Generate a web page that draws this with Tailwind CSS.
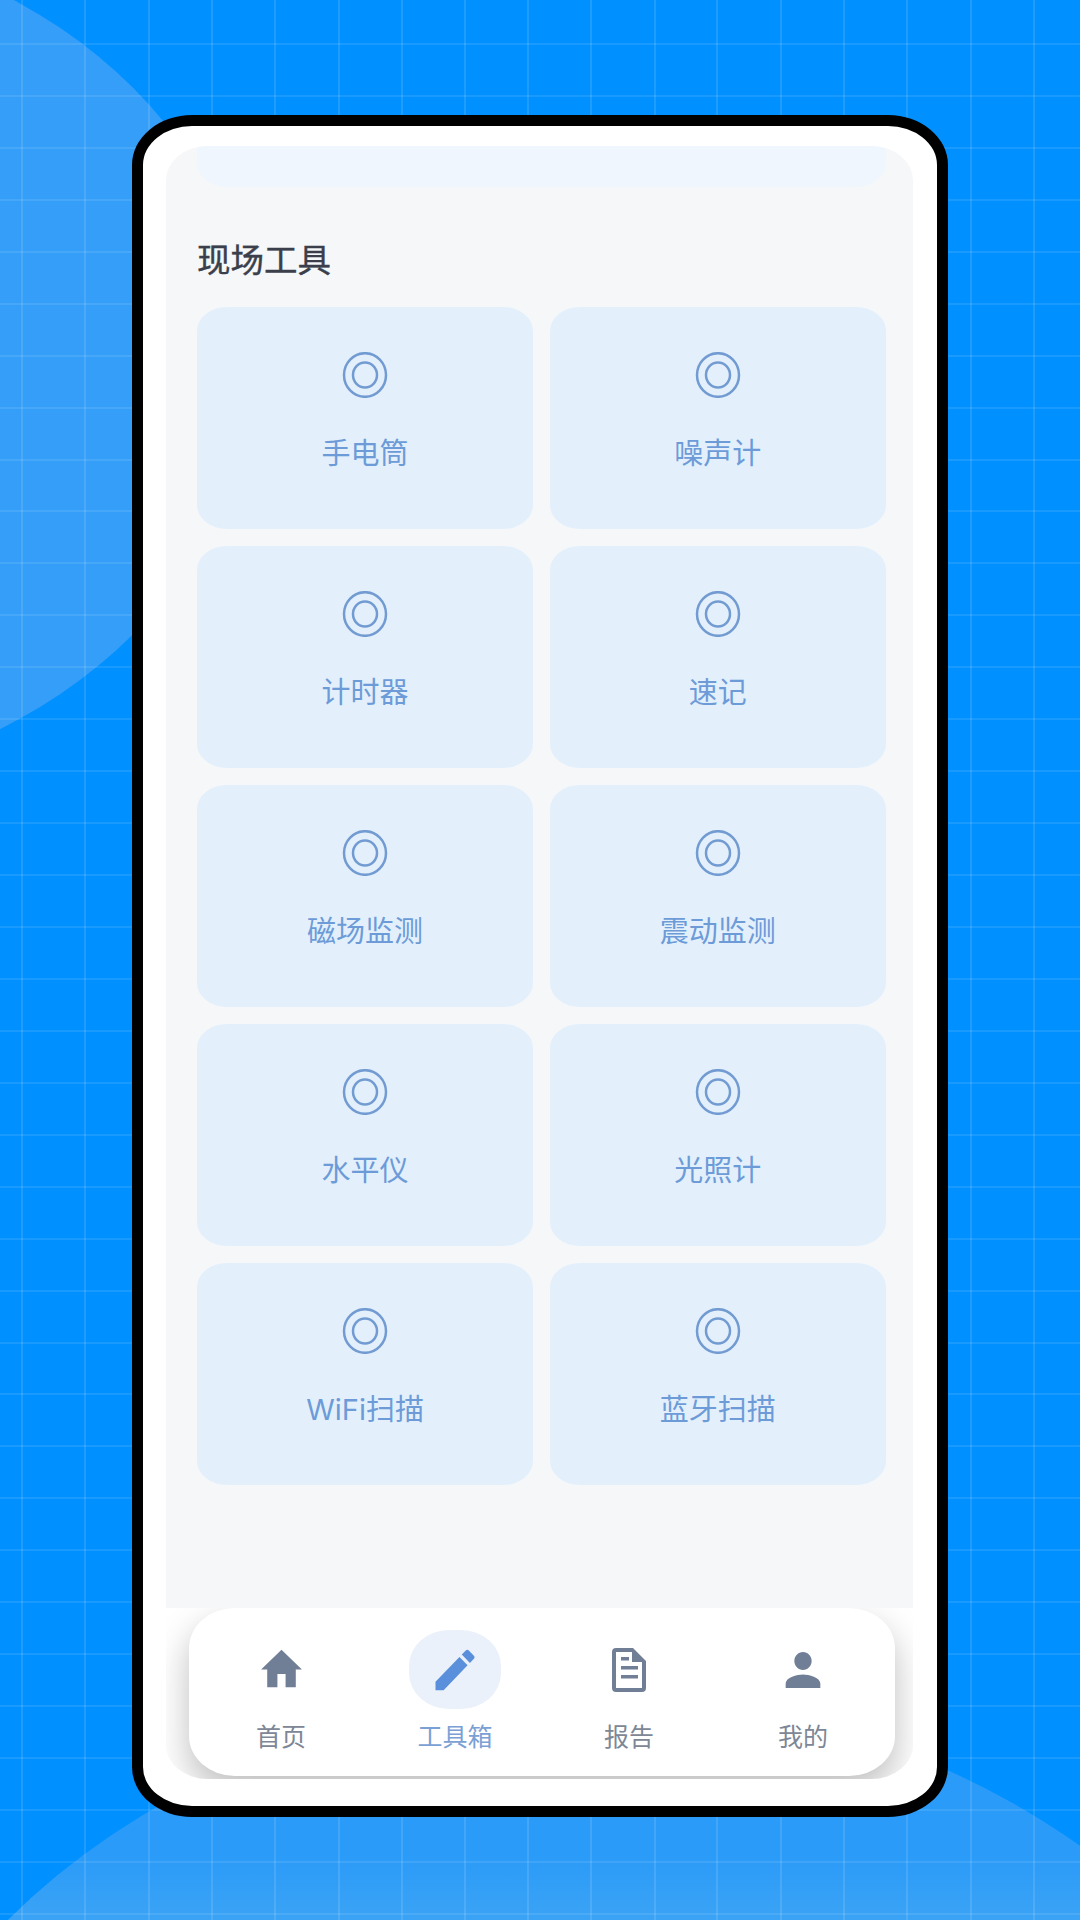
<!DOCTYPE html>
<html lang="zh-CN">
<head>
    <meta charset="UTF-8">
    <meta name="viewport" content="width=device-width, initial-scale=1.0">
    <title>现场工具</title>
    <script src="https://cdn.jsdelivr.net/npm/@tailwindcss/browser@4"></script>
</head>
<body class="bg-[#0090ff] font-['Inter','Noto_Sans_CJK_SC',sans-serif]">
    <div class="relative w-[1080px] h-[1920px] overflow-hidden bg-[#0090ff] pt-[115px]">
        <!-- background shapes and grid -->
        <div class="absolute left-[-798px] top-[-70px] w-[1050px] h-[862px] rounded-[50%] bg-[#349ef8]"></div>
        <div class="absolute left-[-163px] top-[1695px] w-[1502px] h-[1233px] rounded-[50%] bg-[linear-gradient(to_bottom,#2a9bf8_0,#2a9bf8_160px,#3ba3f5_225px)]"></div>
        <svg class="absolute left-0 top-0" width="1080" height="1920" fill="none" stroke="#ffffff" stroke-opacity="0.2" stroke-width="1.2">
            <path d="M22 0V1920M85 0V1920M149 0V1920M212 0V1920M275 0V1920M339 0V1920M402 0V1920M465 0V1920M528 0V1920M591 0V1920M655 0V1920M717 0V1920M781 0V1920M844 0V1920M907 0V1920M971 0V1920M1034 0V1920"/>
            <path d="M0 44H1080M0 96H1080M0 148H1080M0 200H1080M0 252H1080M0 304H1080M0 356H1080M0 408H1080M0 460H1080M0 511H1080M0 563H1080M0 615H1080M0 667H1080M0 719H1080M0 771H1080M0 823H1080M0 875H1080M0 927H1080M0 979H1080M0 1031H1080M0 1083H1080M0 1135H1080M0 1187H1080M0 1239H1080M0 1291H1080M0 1343H1080M0 1394H1080M0 1446H1080M0 1498H1080M0 1550H1080M0 1602H1080M0 1654H1080M0 1706H1080M0 1758H1080M0 1810H1080M0 1862H1080M0 1914H1080"/>
        </svg>

        <!-- phone -->
        <div class="relative mx-auto w-[816px] h-[1702px] bg-white border-[11px] border-black rounded-[60px/50px] pt-[20px] pb-[27px] pl-[23px] pr-[24px]">
            <div class="flex flex-col h-full bg-[#f6f7f9] rounded-[42px/34px] overflow-hidden">
                <div class="ml-[31px] mr-[27px] h-[41px] shrink-0 bg-[#eff6fd] rounded-b-[30px_24px]"></div>
                <h2 class="mt-[53px] ml-[31px] text-[33.5px] leading-[40px] font-normal text-[#3a3f4b] [-webkit-text-stroke:0.4px_#3a3f4b]">现场工具</h2>
                <div class="mt-[27px] ml-[31px] mr-[27px] grid grid-cols-2 gap-x-[16.5px] gap-y-[17.5px]">
                    <div class="h-[221.5px] bg-[#e3f0fc] rounded-[30px/24px] flex flex-col items-center pt-[45px]">
                        <svg width="46" height="46" viewBox="0 0 46 46" fill="none" stroke="#729bd2" stroke-width="2.5"><ellipse cx="23" cy="23" rx="21" ry="21.8"/><ellipse cx="23" cy="23" rx="12" ry="12.5"/></svg>
                        <span class="mt-[36px] text-[29px] leading-[40px] text-[#6d9bd8]">手电筒</span>
                    </div>
                    <div class="h-[221.5px] bg-[#e3f0fc] rounded-[30px/24px] flex flex-col items-center pt-[45px]">
                        <svg width="46" height="46" viewBox="0 0 46 46" fill="none" stroke="#729bd2" stroke-width="2.5"><ellipse cx="23" cy="23" rx="21" ry="21.8"/><ellipse cx="23" cy="23" rx="12" ry="12.5"/></svg>
                        <span class="mt-[36px] text-[29px] leading-[40px] text-[#6d9bd8]">噪声计</span>
                    </div>
                    <div class="h-[221.5px] bg-[#e3f0fc] rounded-[30px/24px] flex flex-col items-center pt-[45px]">
                        <svg width="46" height="46" viewBox="0 0 46 46" fill="none" stroke="#729bd2" stroke-width="2.5"><ellipse cx="23" cy="23" rx="21" ry="21.8"/><ellipse cx="23" cy="23" rx="12" ry="12.5"/></svg>
                        <span class="mt-[36px] text-[29px] leading-[40px] text-[#6d9bd8]">计时器</span>
                    </div>
                    <div class="h-[221.5px] bg-[#e3f0fc] rounded-[30px/24px] flex flex-col items-center pt-[45px]">
                        <svg width="46" height="46" viewBox="0 0 46 46" fill="none" stroke="#729bd2" stroke-width="2.5"><ellipse cx="23" cy="23" rx="21" ry="21.8"/><ellipse cx="23" cy="23" rx="12" ry="12.5"/></svg>
                        <span class="mt-[36px] text-[29px] leading-[40px] text-[#6d9bd8]">速记</span>
                    </div>
                    <div class="h-[221.5px] bg-[#e3f0fc] rounded-[30px/24px] flex flex-col items-center pt-[45px]">
                        <svg width="46" height="46" viewBox="0 0 46 46" fill="none" stroke="#729bd2" stroke-width="2.5"><ellipse cx="23" cy="23" rx="21" ry="21.8"/><ellipse cx="23" cy="23" rx="12" ry="12.5"/></svg>
                        <span class="mt-[36px] text-[29px] leading-[40px] text-[#6d9bd8]">磁场监测</span>
                    </div>
                    <div class="h-[221.5px] bg-[#e3f0fc] rounded-[30px/24px] flex flex-col items-center pt-[45px]">
                        <svg width="46" height="46" viewBox="0 0 46 46" fill="none" stroke="#729bd2" stroke-width="2.5"><ellipse cx="23" cy="23" rx="21" ry="21.8"/><ellipse cx="23" cy="23" rx="12" ry="12.5"/></svg>
                        <span class="mt-[36px] text-[29px] leading-[40px] text-[#6d9bd8]">震动监测</span>
                    </div>
                    <div class="h-[221.5px] bg-[#e3f0fc] rounded-[30px/24px] flex flex-col items-center pt-[45px]">
                        <svg width="46" height="46" viewBox="0 0 46 46" fill="none" stroke="#729bd2" stroke-width="2.5"><ellipse cx="23" cy="23" rx="21" ry="21.8"/><ellipse cx="23" cy="23" rx="12" ry="12.5"/></svg>
                        <span class="mt-[36px] text-[29px] leading-[40px] text-[#6d9bd8]">水平仪</span>
                    </div>
                    <div class="h-[221.5px] bg-[#e3f0fc] rounded-[30px/24px] flex flex-col items-center pt-[45px]">
                        <svg width="46" height="46" viewBox="0 0 46 46" fill="none" stroke="#729bd2" stroke-width="2.5"><ellipse cx="23" cy="23" rx="21" ry="21.8"/><ellipse cx="23" cy="23" rx="12" ry="12.5"/></svg>
                        <span class="mt-[36px] text-[29px] leading-[40px] text-[#6d9bd8]">光照计</span>
                    </div>
                    <div class="h-[221.5px] bg-[#e3f0fc] rounded-[30px/24px] flex flex-col items-center pt-[45px]">
                        <svg width="46" height="46" viewBox="0 0 46 46" fill="none" stroke="#729bd2" stroke-width="2.5"><ellipse cx="23" cy="23" rx="21" ry="21.8"/><ellipse cx="23" cy="23" rx="12" ry="12.5"/></svg>
                        <span class="mt-[36px] text-[29px] leading-[40px] text-[#6d9bd8]">WiFi扫描</span>
                    </div>
                    <div class="h-[221.5px] bg-[#e3f0fc] rounded-[30px/24px] flex flex-col items-center pt-[45px]">
                        <svg width="46" height="46" viewBox="0 0 46 46" fill="none" stroke="#729bd2" stroke-width="2.5"><ellipse cx="23" cy="23" rx="21" ry="21.8"/><ellipse cx="23" cy="23" rx="12" ry="12.5"/></svg>
                        <span class="mt-[36px] text-[29px] leading-[40px] text-[#6d9bd8]">蓝牙扫描</span>
                    </div>
                </div>

                <!-- bottom nav -->
                <div class="mt-auto h-[171px] shrink-0 bg-white overflow-hidden pl-[23px]">
                    <nav class="flex w-[706px] h-[168px] px-[5px] pt-[22px] bg-white rounded-[46px/40px] shadow-[0_16px_36px_rgba(0,0,0,0.26)]">
                        <div class="w-[174px] flex flex-col items-center">
                            <div class="h-[79px] flex items-center justify-center">
                                <svg width="49" height="53" viewBox="0 0 24 24" preserveAspectRatio="none" fill="#717f96"><path d="M10 20v-6h4v6h5v-8h3L12 3 2 12h3v8z"/></svg>
                            </div>
                            <span class="mt-[12px] text-[25px] leading-[32px] text-[#7d8796]">首页</span>
                        </div>
                        <div class="w-[174px] flex flex-col items-center">
                            <div class="w-[92px] h-[79px] rounded-[40px/36px] bg-[#eaf1fb] flex items-center justify-center">
                                <svg width="52" height="54" viewBox="0 0 24 24" preserveAspectRatio="none" fill="#5a8fdc"><path d="M3 17.25V21h3.75L17.81 9.94l-3.75-3.75L3 17.25zM20.71 7.04c.39-.39.39-1.02 0-1.41l-2.34-2.34c-.39-.39-1.02-.39-1.41 0l-1.83 1.83 3.75 3.75 1.83-1.83z"/></svg>
                            </div>
                            <span class="mt-[12px] text-[25px] leading-[32px] text-[#7ba0d4]">工具箱</span>
                        </div>
                        <div class="w-[174px] flex flex-col items-center">
                            <div class="h-[79px] flex items-center justify-center">
                                <svg width="34" height="44" viewBox="0 0 34 44" fill="#717f96"><path fill-rule="evenodd" d="M4 0H21L34 13V40a4 4 0 0 1-4 4H4a4 4 0 0 1-4-4V4a4 4 0 0 1 4-4zM4 4V40H30V14H20V4z"/><rect x="9" y="9" width="8" height="3.5"/><rect x="9" y="18" width="17" height="3.5"/><rect x="9" y="27" width="17" height="3.5"/></svg>
                            </div>
                            <span class="mt-[12px] text-[25px] leading-[32px] text-[#7d8796]">报告</span>
                        </div>
                        <div class="w-[174px] flex flex-col items-center">
                            <div class="h-[79px] flex items-center justify-center">
                                <svg width="52" height="54" viewBox="0 0 24 24" preserveAspectRatio="none" fill="#717f96"><path d="M12 12c2.21 0 4-1.79 4-4s-1.79-4-4-4-4 1.79-4 4 1.79 4 4 4zm0 2c-2.67 0-8 1.34-8 4v2h16v-2c0-2.66-5.33-4-8-4z"/></svg>
                            </div>
                            <span class="mt-[12px] text-[25px] leading-[32px] text-[#7d8796]">我的</span>
                        </div>
                    </nav>
                </div>
            </div>
        </div>
    </div>
</body>
</html>
